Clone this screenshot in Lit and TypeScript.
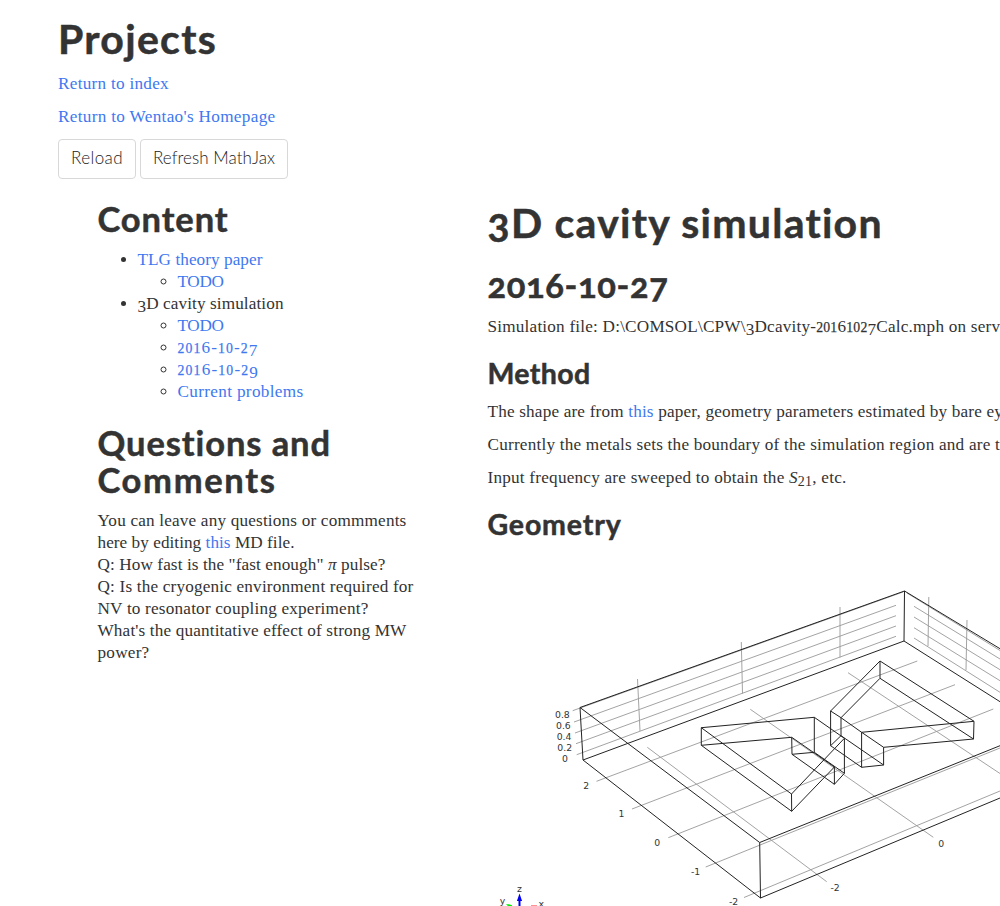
import { LitElement, html, svg, css } from "lit";
import { customElement, property } from "lit/decorators.js";

/** A single line of text whose tracking is adjusted to a given measure. */
@customElement("text-run")
class TextRun extends LitElement {
  @property({ type: Number }) width = 0;
  static styles = css`
    :host {
      display: inline-block;
      white-space: pre;
    }
  `;
  firstUpdated() {
    const natural = this.getBoundingClientRect().width;
    const count = (this.textContent || "").length;
    if (this.width && count) {
      this.style.letterSpacing = `${(this.width - natural) / count}px`;
    }
  }
  render() {
    return html`<slot></slot>`;
  }
}

/** Text figures: x-height 0 1 2, descending 3 4 5 7 9. */
const figures = (text: string) =>
  text.split("").map((c) =>
    /[012]/.test(c)
      ? html`<span class="low">${c}</span>`
      : /[34579]/.test(c)
        ? html`<span class="desc">${c}</span>`
        : c,
  );

type Pt = [number, number];
type Seg = [number, number, number, number];

const grid: Seg[] = [
  [572.7, 710.7, 903, 592], [574, 722, 896, 605.3], [575, 733, 896, 615.7],
  [576, 743.7, 896, 626], [576.7, 754.7, 896, 636.3],
  [907, 593, 1000, 650.5], [914, 606.3, 1000, 659], [914, 617, 1000, 669.7],
  [914, 627.7, 1000, 680.7], [914, 638, 1000, 692.3],
  [637.5, 679, 640, 731], [741.3, 642, 742.5, 693.5], [840, 607, 840, 657.5],
  [928.8, 597, 928, 646], [967, 620, 966, 670],
  [596.5, 781.3, 917.3, 661], [632, 809, 955, 684.7], [668.3, 837.7, 993.3, 709],
  [705.7, 867, 1000, 748], [744, 897.5, 1000, 791],
  [647.3, 747.3, 826.7, 881.7], [750.3, 709.3, 933.3, 837.3], [848, 672.7, 1000, 773.5],
];

const frame: Seg[] = [
  [580, 707.5, 904.5, 591], [583, 760, 904, 641], [580, 707.5, 583, 760],
  [904.5, 591, 904, 641], [580, 707.5, 759.7, 842.5], [583, 760, 760.5, 898],
  [759.7, 842.5, 760.5, 898], [904.5, 591, 1000, 648.7], [904, 641, 1000, 701.7],
  [759.7, 842.5, 1000, 745.7], [760.5, 898, 1000, 798],
];

const nodes: Record<string, Pt> = {
  a: [701.3, 727.7], A: [701.3, 745.3], b: [814.3, 717.3], B: [814.3, 752.3],
  c: [791.7, 737.3], C: [792, 754.3], d: [834.4, 767], D: [834.4, 784.3],
  e: [844.4, 738.3], E: [844.4, 773.3], f: [791.5, 794], F: [791.7, 811.3],
  g: [830.6, 711], G: [830.6, 745.7], h: [841, 717.7], H: [841, 735.7],
  i: [880, 661], I: [880, 678.3], j: [861.6, 732.3], J: [861.6, 767.3],
  k: [883.6, 747.3], K: [883.6, 765], l: [974, 721.3], L: [973.5, 739],
};
const edges =
  "aA ab Ac bB cC CB be af AF fF fe Fd dD DE eE cd CD BE gG gi hI hH iI il IL lL jl kL jJ kK gh hj jk HG GJ JK HK".split(" ");

const labels: [number, number, string][] = [
  [555, 718, "0.8"], [556, 729, "0.6"], [556.7, 740, "0.4"], [557.3, 751, "0.2"],
  [562, 762, "0"], [583.3, 789, "2"], [618.5, 817, "1"], [654.3, 845.5, "0"],
  [691, 874.5, "-1"], [729, 905, "-2"], [830.5, 891.3, "-2"], [938.3, 847, "0"],
  [517, 892, "z"], [499.8, 904, "y"], [538.5, 907, "x"],
];

const geometry = svg`
  <g class="grid">${grid.map(([a, b, c, d]) => svg`<line x1=${a} y1=${b} x2=${c} y2=${d}></line>`)}</g>
  <g class="edge">
    ${frame.map(([a, b, c, d]) => svg`<line x1=${a} y1=${b} x2=${c} y2=${d}></line>`)}
    ${edges.map((e) => {
      const [p, q] = [nodes[e[0]], nodes[e[1]]];
      return svg`<line x1=${p[0]} y1=${p[1]} x2=${q[0]} y2=${q[1]}></line>`;
    })}
  </g>
  <g class="tick">${labels.map(([x, y, t]) => svg`<text x=${x} y=${y}>${t}</text>`)}</g>
  <path d="M519.5 893.5l2.6 7.5h-1.6v6h-2v-6h-1.6z" fill="#0000f0"></path>
  <path d="M506 904.2h3l3 1v2h-3z" fill="#00f000"></path>
  <path d="M531 905.6h6" stroke="#f88" stroke-width="1"></path>`;

@customElement("app-root")
class AppRoot extends LitElement {
  static styles = css`
    :host {
      display: block;
      box-sizing: border-box;
      width: 1000px;
      height: 906px;
      overflow: hidden;
      background: #fff;
      color: #333;
      padding: 17px 0 0 58px;
      font: 17.2px/22px "Liberation Serif", serif;
    }
    h1, h2, h3, p, ul { margin: 0; }
    h1, h2, h3 {
      font-family: Lato, sans-serif;
      font-weight: 700;
      font-variant-numeric: oldstyle-nums;
      -webkit-text-stroke: 0.5px currentColor;
      white-space: nowrap;
    }
    h1 { font-size: 41px; line-height: 44px; margin-bottom: 12px; }
    h2 { font-size: 34.5px; line-height: 37px; margin-bottom: 11px; position: relative; top: -1px; }
    h3 { font-size: 28.5px; line-height: 31px; margin: 20px 0 12px; }
    p { margin-bottom: 11px; white-space: nowrap; }
    a { color: #4078f0; text-decoration: none; }
    text-run { vertical-align: top; }
    .buttons { display: flex; gap: 4px; }
    button {
      box-sizing: border-box;
      height: 40px;
      padding: 0 12px 2px;
      border: 1px solid #d8d8d8;
      border-radius: 4px;
      background: #fff;
      color: #222;
      font: 300 17px/22px Lato, sans-serif;
    }
    .columns { display: grid; grid-template-columns: 390px 1fr; padding: 22px 0 0 39.5px; }
    ul { padding-left: 40px; list-style: disc; }
    ul ul { list-style: circle; }
    .toc { margin-bottom: 22px; }
    .main h1 { margin-bottom: 22px; }
    .main h2 { margin-bottom: 12px; }
    .low { font-size: 0.8em; line-height: 0; -webkit-text-stroke: 0.25px currentColor; }
    .desc { position: relative; top: 0.17em; line-height: 0; }
    .math { font-style: italic; }
    .sub { font-size: 14px; line-height: 0; position: relative; top: 3px; }
    .figure { display: block; margin-top: -3px; }
    .grid { stroke: #999; stroke-width: 0.9; }
    .edge { stroke: #222; stroke-width: 1; }
    .tick { font: 9.3px "DejaVu Sans", sans-serif; fill: #333; }
  `;

  render() {
    return html`
      <h1><text-run width="159">Projects</text-run></h1>
      <p><a><text-run width="111">Return to index</text-run></a></p>
      <p><a><text-run width="217.5">Return to Wentao's Homepage</text-run></a></p>
      <div class="buttons">
        <button><text-run width="52">Reload</text-run></button>
        <button><text-run width="122">Refresh MathJax</text-run></button>
      </div>
      <div class="columns">
        <div class="side">
          <h2><text-run width="131">Content</text-run></h2>
          <ul class="toc">
            <li><a><text-run width="125">TLG theory paper</text-run></a>
              <ul><li><a><text-run width="46">TODO</text-run></a></li></ul>
            </li>
            <li><text-run width="146">${figures("3D cavity simulation")}</text-run>
              <ul>
                <li><a><text-run width="46">TODO</text-run></a></li>
                <li><a><text-run width="81">${figures("2016-10-27")}</text-run></a></li>
                <li><a><text-run width="81.5">${figures("2016-10-29")}</text-run></a></li>
                <li><a><text-run width="126">Current problems</text-run></a></li>
              </ul>
            </li>
          </ul>
          <h2><text-run width="234">Questions and</text-run><br /><text-run width="179">Comments</text-run></h2>
          <p>
            <text-run width="309">You can leave any questions or commments</text-run><br />
            <text-run width="197">here by editing <a>this</a> MD file.</text-run><br />
            <text-run width="288">Q: How fast is the "fast enough" <span class="math">π</span> pulse?</text-run><br />
            <text-run width="316">Q: Is the cryogenic environment required for</text-run><br />
            <text-run width="271">NV to resonator coupling experiment?</text-run><br />
            <text-run width="309">What's the quantitative effect of strong MW</text-run><br />
            <text-run width="52">power?</text-run>
          </p>
        </div>
        <div class="main">
          <h1><text-run width="396">3D cavity simulation</text-run></h1>
          <h2><text-run width="181">2016-10-27</text-run></h2>
          <p><text-run width="512.5">${figures("Simulation file: D:\\COMSOL\\CPW\\3Dcavity-20161027Calc.mph on serv")}</text-run></p>
          <h3><text-run width="103">Method</text-run></h3>
          <p><text-run width="515.5">The shape are from <a>this</a> paper, geometry parameters estimated by bare ey</text-run></p>
          <p><text-run width="512.5">Currently the metals sets the boundary of the simulation region and are t</text-run></p>
          <p><text-run width="359">Input frequency are sweeped to obtain the <span class="math">S</span><span class="sub">21</span>, etc.</text-run></p>
          <h3><text-run width="134">Geometry</text-run></h3>
          <svg class="figure" width="512" height="357" viewBox="488 549 512 357">${geometry}</svg>
        </div>
      </div>
    `;
  }
}
